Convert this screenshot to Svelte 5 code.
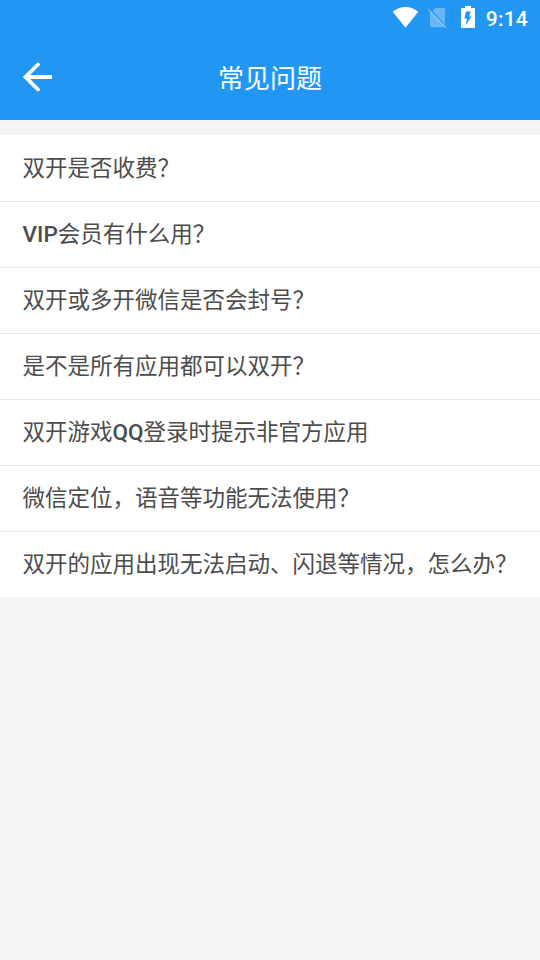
<script lang="ts">
    export let title = "常见问题"
    export let time = "9:14"

    // latin parts are set in a heavier face than the chinese text
    const questions = [
        "双开是否收费？",
        "VIP会员有什么用？",
        "双开或多开微信是否会封号？",
        "是不是所有应用都可以双开？",
        "双开游戏QQ登录时提示非官方应用",
        "微信定位，语音等功能无法使用？",
        "双开的应用出现无法启动、闪退等情况，怎么办？"
    ]

    function split(text: string) {
        return text.split(/([A-Za-z]+)/).filter(part => part)
    }
</script>

<div class="page">
    <header>
        <div class="status">
            <svg class="wifi" width="26" height="21" viewBox="0 0 26 21">
                <path d="M-.3 4.700C3.300 1.700 7.900 0 12.500 0s9.200 1.700 12.800 4.700L12.500 20.700z" fill="#fff"/>
            </svg>
            <svg class="sim" width="20" height="22" viewBox="0 0 20 22">
                <path d="M7.400 1H15.600q1.400 0 1.400 1.400V17.600L4.700 4z" fill="#fff" fill-opacity=".32"/>
                <path d="M2 4.200L16.800 19.600q-.4.600-1.200.6H3.400q-1.400 0-1.400-1.400z" fill="#fff" fill-opacity=".32"/>
                <path d="M.4 2.400L18.400 21" stroke="#fff" stroke-opacity=".34" stroke-width="1.500"/>
            </svg>
            <svg class="battery" width="14" height="22" viewBox="0 0 14 22">
                <path fill-rule="evenodd" fill="#fff" d="M4 0h6v2h3q1 0 1 1v18q0 1-1 1H1q-1 0-1-1V3q0-1 1-1h3zM5 5.500L3.400 12.600H6L4.600 19.200L10.600 10.400H8L9.800 5.500z"/>
            </svg>
            <span class="time">{time}</span>
        </div>
        <div class="bar">
            <button aria-label="返回">
                <svg width="30" height="30" viewBox="0 0 30 30" fill="none" stroke="#fff">
                    <path d="M15 2.500L2.500 15 15 27.500" stroke-width="3.800" stroke-linecap="round"/>
                    <path d="M3 15h26" stroke-width="4"/>
                </svg>
            </button>
            <h1>{title}</h1>
        </div>
    </header>
    <ul>
        {#each questions as question}
            <li>
                {#each split(question) as part}{#if /[A-Za-z]/.test(part)}<b>{part}</b>{:else}{part}{/if}{/each}
            </li>
        {/each}
    </ul>
</div>

<style>
    :global(body) {
        background: #f4f4f4;
    }

    .page {
        min-height: 960px;
        background: #f4f4f4;
        font-family: "Noto Sans CJK SC", sans-serif;
    }

    header {
        height: 120px;
        background: #2296f3;
        color: #fff;
    }

    .status {
        display: flex;
        justify-content: flex-end;
        height: 36px;
        padding-right: 12px;
        box-sizing: border-box;
    }

    .wifi {
        margin: 7px 9px 0 0;
        overflow: visible;
    }

    .sim {
        margin: 7px 13px 0 0;
    }

    .battery {
        margin: 6px 11px 0 0;
    }

    .time {
        font: 500 21px/39px Roboto, sans-serif;
        letter-spacing: 0.2px;
    }

    .bar {
        display: grid;
        grid-template-columns: 75px 1fr 75px;
        align-items: center;
        height: 82.6px;
    }

    button {
        display: flex;
        padding: 0 0 0 23px;
        border: 0;
        background: none;
    }

    h1 {
        margin: 0;
        font-size: 26px;
        font-weight: 400;
        line-height: 36px;
        padding-bottom: 1px;
        text-align: center;
    }

    ul {
        margin: 15px 0 0;
        padding: 0;
        list-style: none;
        background: #fff;
    }

    li {
        height: 66px;
        padding: 0 22.5px;
        box-sizing: border-box;
        color: #4c4c4c;
        font-size: 22.5px;
        line-height: 63px;
        white-space: nowrap;
    }

    li + li {
        border-top: 1px solid #e8e8e8;
        line-height: 61px;
    }

    b {
        font-family: Roboto, sans-serif;
        font-weight: 500;
    }
</style>
